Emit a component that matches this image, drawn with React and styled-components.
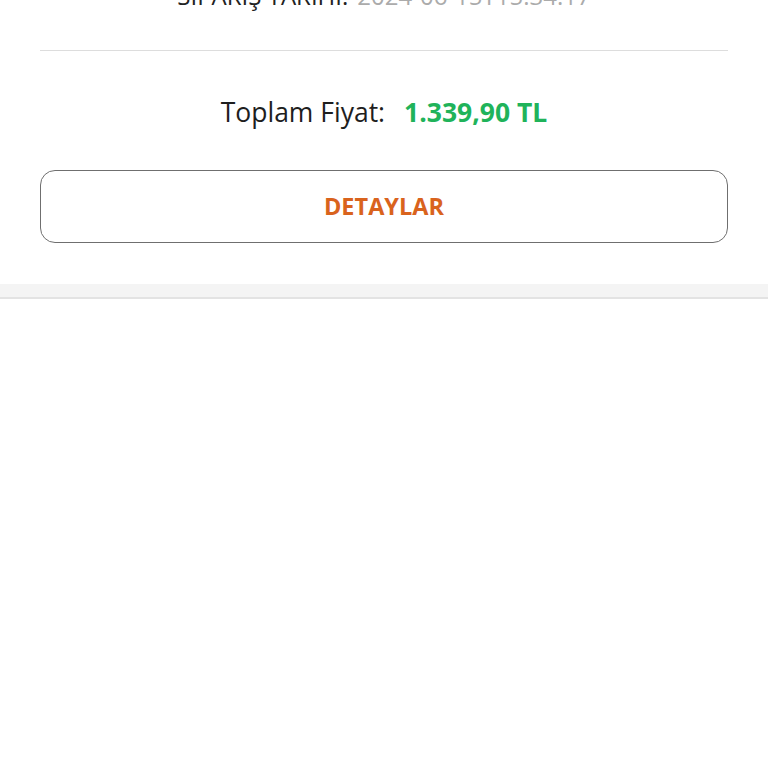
import React from 'react';
import styled, { createGlobalStyle } from 'styled-components';

const GlobalStyle = createGlobalStyle`
  html, body {
    margin: 0;
    padding: 0;
    background: #ffffff;
    overflow: hidden;
  }
  body {
    font-family: "Open Sans", "Noto Sans", sans-serif;
  }
`;

const Page = styled.div`
  width: 768px;
  min-height: 768px;
  background: #ffffff;
`;

const OrderCard = styled.div`
  margin-top: -21px;
  padding: 0 40px 41px;
  background: #ffffff;
`;

const DateRow = styled.div`
  display: flex;
  justify-content: center;
  gap: 9px;
  font-size: 24px;
  line-height: 33px;
  padding-bottom: 38px;
  border-bottom: 1.5px solid #dddddd;
`;

const DateLabel = styled.span`
  color: #222222;
`;

const DateValue = styled.span`
  color: #ababab;
`;

const PriceRow = styled.div`
  display: flex;
  justify-content: center;
  align-items: baseline;
  gap: 19px;
  margin-top: 43px;
  font-size: 26.5px;
  line-height: 36px;
`;

const PriceLabel = styled.span`
  color: #1e1e1e;
`;

const PriceValue = styled.span`
  color: #20b35a;
  font-weight: 700;
`;

const DetailButton = styled.button`
  display: flex;
  align-items: center;
  justify-content: center;
  width: 100%;
  height: 73px;
  margin-top: 40px;
  padding: 0 0 2px;
  background: #ffffff;
  border: 1.5px solid #6f6f6f;
  border-radius: 15px;
  font-family: inherit;
  font-size: 23.5px;
  font-weight: 700;
  color: #d9631d;
  cursor: pointer;
`;

const Separator = styled.div`
  height: 13px;
  background: #f4f4f4;
  border-bottom: 2px solid #e3e3e3;
`;

export default function App() {
  return (
    <Page>
      <GlobalStyle />
      <OrderCard>
        <DateRow>
          <DateLabel>SİPARİŞ TARİHİ:</DateLabel>
          <DateValue>2024-06-15T15:34:17</DateValue>
        </DateRow>
        <PriceRow>
          <PriceLabel>Toplam Fiyat:</PriceLabel>
          <PriceValue>1.339,90 TL</PriceValue>
        </PriceRow>
        <DetailButton>DETAYLAR</DetailButton>
      </OrderCard>
      <Separator />
    </Page>
  );
}
